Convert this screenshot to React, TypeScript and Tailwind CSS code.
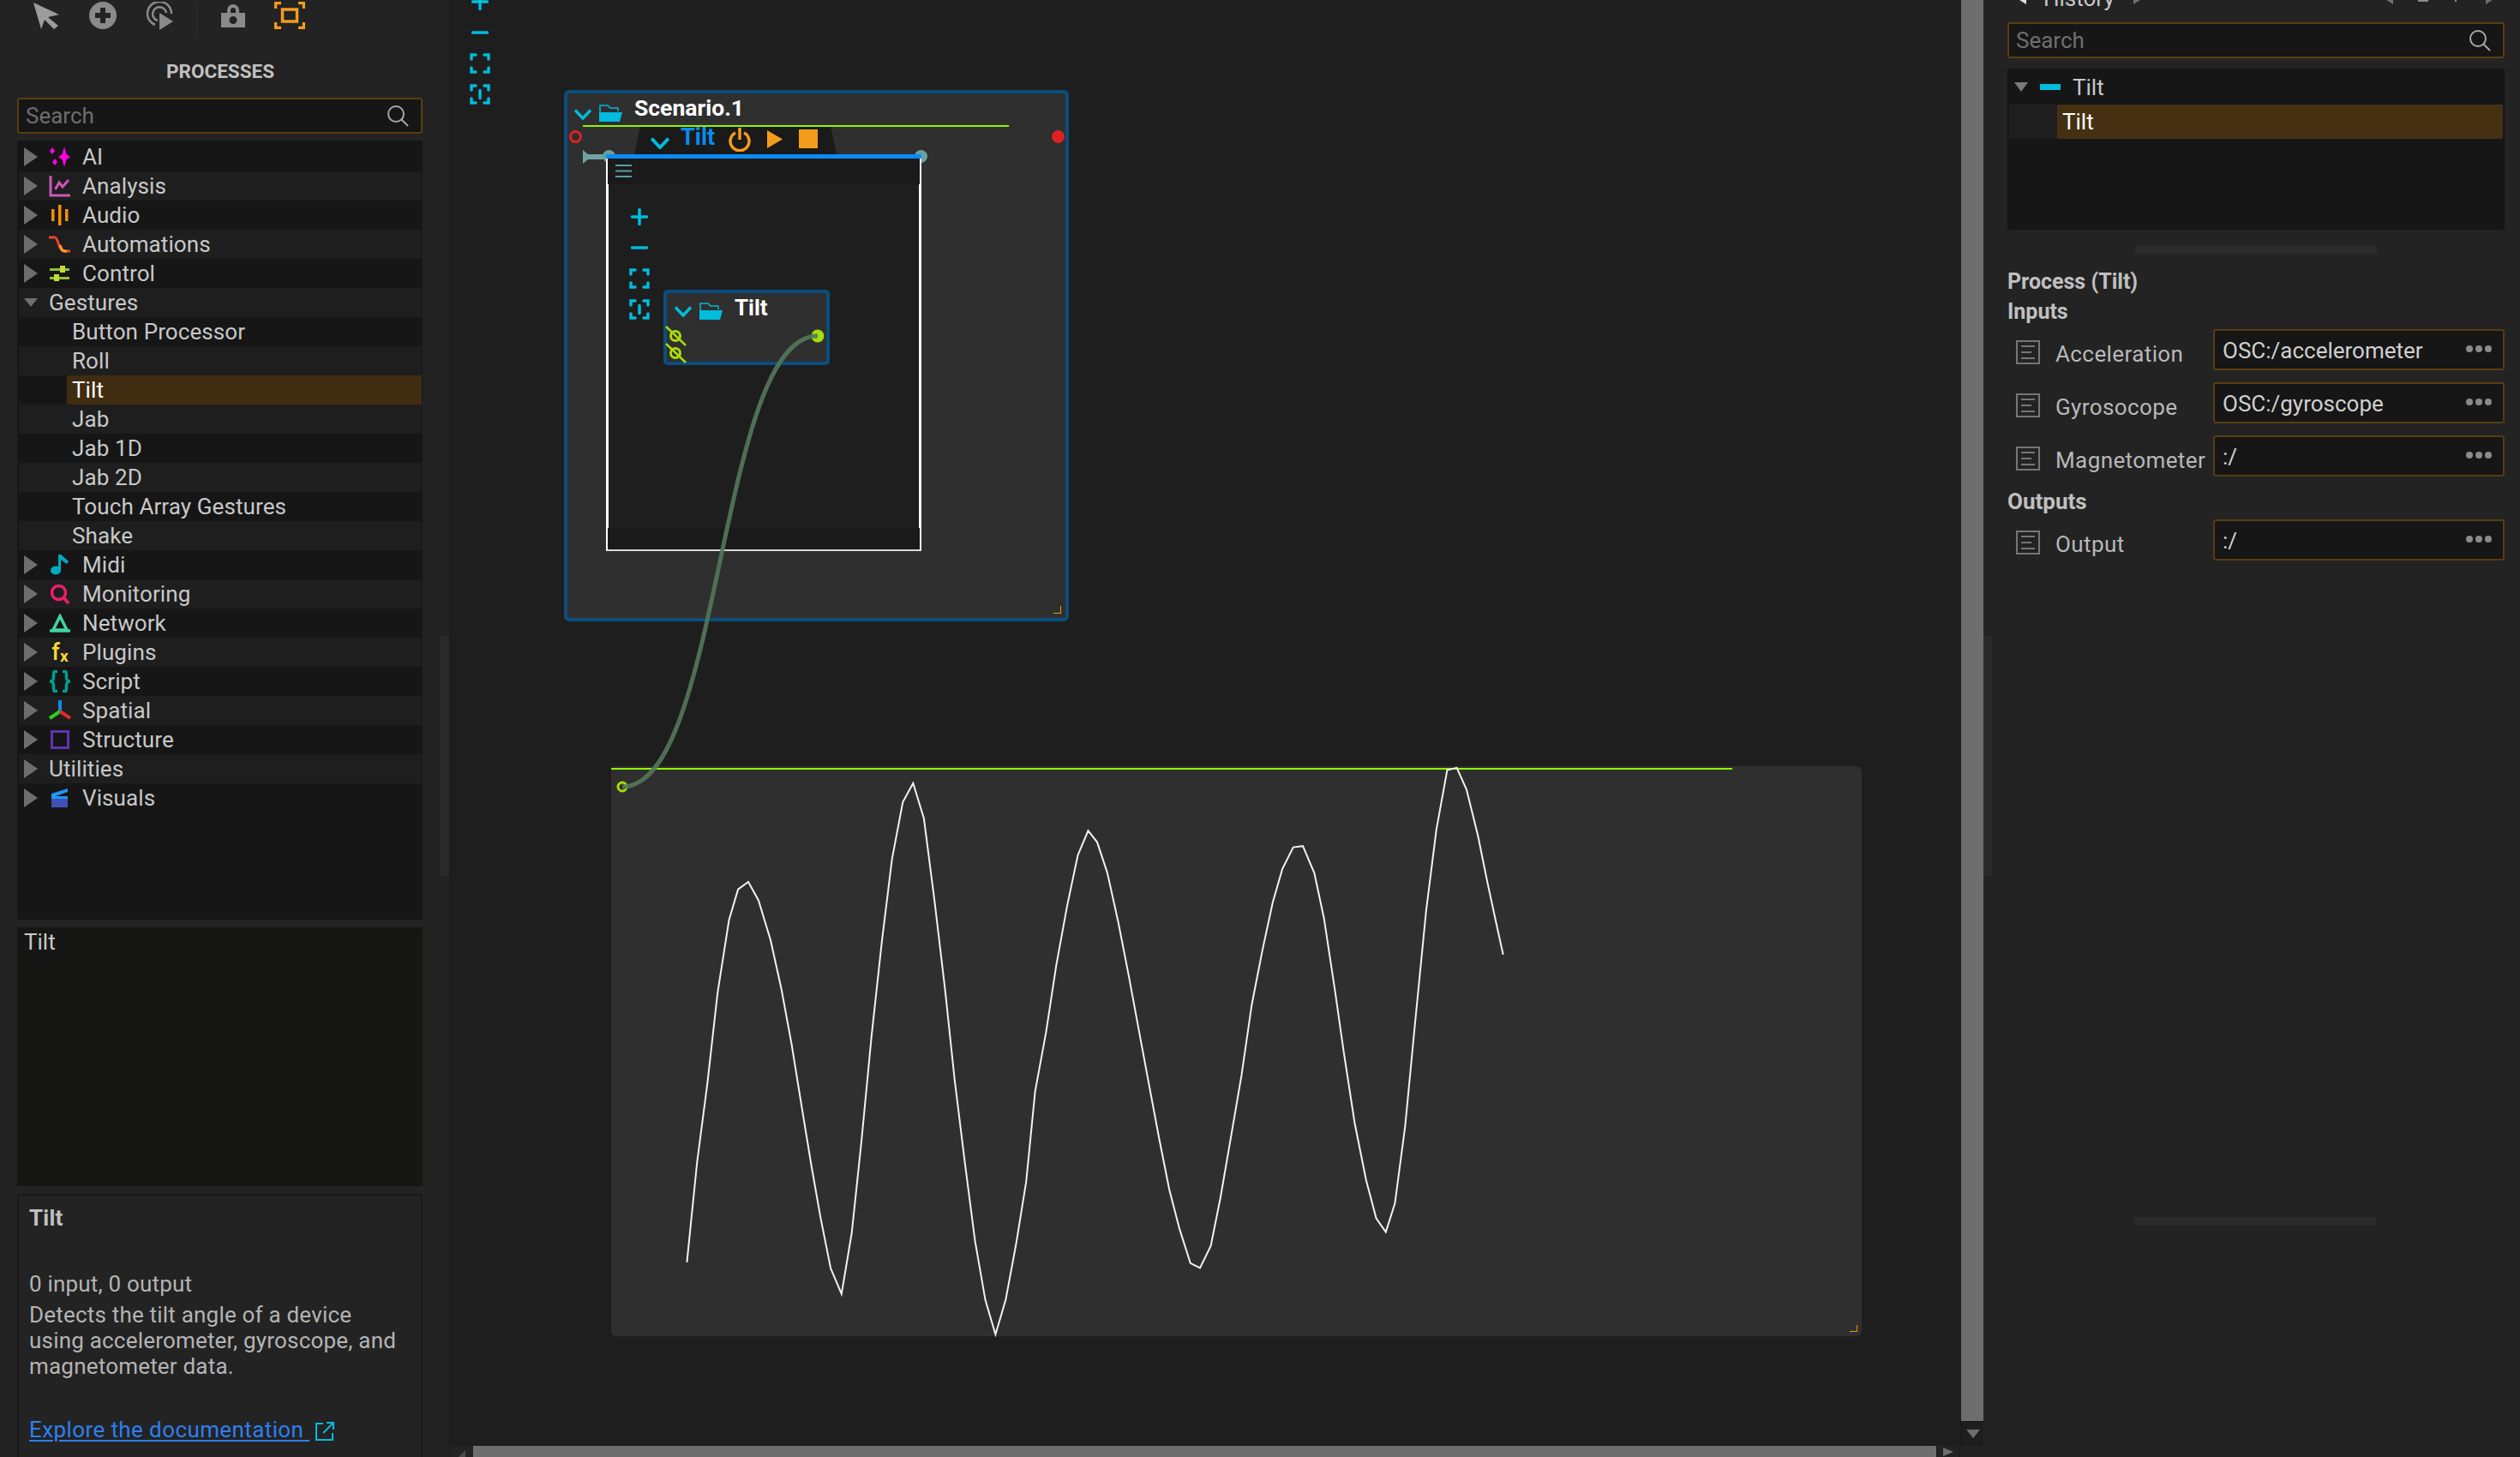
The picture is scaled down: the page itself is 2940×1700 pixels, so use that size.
import React from 'react';

const CYAN = '#00bcdc';
const ORANGE = '#f39c1c';
const LIME = '#a9dc0a';

// curve samples read off the reference
const wave: [number, number][] = [
  [173,1335],[190,1080],[207,880],[224,650],[243,465],[258,387],[275,368],[292,415],[312,515],[330,640],[347,780],[365,950],[380,1090],[395,1220],[412,1350],[430,1415],[447,1260],[463,1030],[480,760],[497,520],[514,310],[532,165],[549,117],[567,207],[585,420],[602,640],[618,870],[635,1080],[652,1280],[669,1430],[686,1518],[703,1430],[720,1290],[737,1130],[752,900],[770,750],[787,580],[805,430],[823,300],[840,238],[855,267],[872,345],[890,470],[908,610],[925,750],[942,890],[958,1020],[975,1150],[992,1250],[1010,1337],[1026,1349],[1044,1293],[1060,1170],[1077,1020],[1095,860],[1112,680],[1130,540],[1147,420],[1163,335],[1181,280],[1197,277],[1216,345],[1232,460],[1250,640],[1265,800],[1283,980],[1302,1125],[1319,1223],[1335,1258],[1350,1185],[1367,990],[1384,720],[1402,440],[1419,235],[1437,84],[1453,78],[1469,133],[1488,250],[1504,370],[1518,470],[1530,553],
];
const wavePoints = wave.map(([x, y]) => `${(680 + x / 1.425).toFixed(1)},${(860 + y / 2.178).toFixed(1)}`).join(' ');

function Arrow({ open }: { open?: boolean }) {
  if (open) {
    return (
      <svg width="16" height="10" viewBox="0 0 16 10" className="shrink-0">
        <path d="M0 0H16L8 10Z" fill="#6e6e6e" />
      </svg>
    );
  }
  return (
    <svg width="16" height="22" viewBox="0 0 16 22" className="shrink-0">
      <path d="M0 0L16 11L0 22Z" fill="#6e6e6e" />
    </svg>
  );
}

const icons: Record<string, React.ReactNode> = {
  AI: (
    <svg width="26" height="24" viewBox="0 0 26 24">
      <path d="M18 0L20.500 9L25 12L20.500 15L18 24L15.500 15L11 12L15.500 9Z" fill="#ff00e6" />
      <path d="M4 1L7 5L4 9L1 5Z M7 14L10 18L7 22L4 18Z" fill="#ff00e6" />
    </svg>
  ),
  Analysis: (
    <svg width="26" height="26" viewBox="0 0 26 26" fill="none" stroke="#c958b8">
      <path d="M2 1V24H25" strokeWidth="3" />
      <path d="M7.500 17L12 9L16 14L23 6" strokeWidth="3" />
    </svg>
  ),
  Audio: (
    <svg width="20" height="24" viewBox="0 0 20 24" fill="#f0900f">
      <rect x="0" y="5" width="3.500" height="14" />
      <rect x="8" y="0" width="3.500" height="24" />
      <rect x="16" y="5" width="3.500" height="14" />
    </svg>
  ),
  Automations: (
    <svg width="26" height="20" viewBox="0 0 26 20" fill="none" strokeWidth="3">
      <path d="M0 2H7C11 2 11 18 18 18H25" stroke="#ee4036" />
      <path d="M13 11C14 14 15 18 18 18H21" stroke="#f5a020" />
    </svg>
  ),
  Control: (
    <svg width="24" height="20" viewBox="0 0 24 20" fill="#8fbf3a">
      <rect x="0" y="4" width="23" height="3" />
      <rect x="12" y="1" width="6" height="8" fill="#c3dc2e" />
      <rect x="0" y="14" width="23" height="3" />
      <rect x="5" y="11" width="6" height="8" fill="#c3dc2e" />
    </svg>
  ),
  Midi: (
    <svg width="24" height="24" viewBox="0 0 24 24" fill="#00acc1">
      <ellipse cx="7" cy="18.500" rx="6" ry="5" />
      <path d="M10 18V0H13L22 8L20 11L13 6V18Z" />
    </svg>
  ),
  Monitoring: (
    <svg width="24" height="24" viewBox="0 0 24 24" fill="none" stroke="#ec1e68" strokeWidth="3.500">
      <circle cx="10.500" cy="10.500" r="8" />
      <path d="M16 16L22 23" />
    </svg>
  ),
  Network: (
    <svg width="24" height="22" viewBox="0 0 24 22" fill="none" stroke="#45d2a0" strokeWidth="3.500">
      <path d="M12 3L20 19H4Z" />
      <path d="M0 20H24" />
    </svg>
  ),
  Script: (
    <svg width="26" height="26" viewBox="0 0 26 26" fill="none" stroke="#009e90" strokeWidth="3.500">
      <path d="M10 1.500H7C5.500 1.500 5.500 3 5.500 5V9C5.500 11 4 13 1 13C4 13 5.500 15 5.500 17V21C5.500 23 5.500 24.500 7 24.500H10" />
      <path d="M16 1.500H19C20.500 1.500 20.500 3 20.500 5V9C20.500 11 22 13 25 13C22 13 20.500 15 20.500 17V21C20.500 23 20.500 24.500 19 24.500H16" />
    </svg>
  ),
  Spatial: (
    <svg width="26" height="24" viewBox="0 0 26 24" fill="none" strokeWidth="4">
      <path d="M13 0V14" stroke="#1088f0" />
      <path d="M13 13L1 21" stroke="#2fd018" />
      <path d="M13 13L25 21" stroke="#d82c2c" />
    </svg>
  ),
  Structure: (
    <svg width="22" height="22" viewBox="0 0 22 22" fill="none" stroke="#5e35b1" strokeWidth="3">
      <rect x="1.500" y="1.500" width="19" height="19" />
    </svg>
  ),
  Visuals: (
    <svg width="20" height="22" viewBox="0 0 20 22">
      <path d="M0 6L19 0V4L5 9H0Z" fill="#2196f3" />
      <rect x="0" y="9" width="19" height="13" fill="#3f51b5" />
      <rect x="0" y="9" width="19" height="3" fill="#2196f3" />
    </svg>
  ),
};

type TreeRow = { label: string; kind: 'cat' | 'open' | 'plain' | 'child'; selected?: boolean };

const rows: TreeRow[] = [
  { label: 'AI', kind: 'cat' },
  { label: 'Analysis', kind: 'cat' },
  { label: 'Audio', kind: 'cat' },
  { label: 'Automations', kind: 'cat' },
  { label: 'Control', kind: 'cat' },
  { label: 'Gestures', kind: 'open' },
  { label: 'Button Processor', kind: 'child' },
  { label: 'Roll', kind: 'child' },
  { label: 'Tilt', kind: 'child', selected: true },
  { label: 'Jab', kind: 'child' },
  { label: 'Jab 1D', kind: 'child' },
  { label: 'Jab 2D', kind: 'child' },
  { label: 'Touch Array Gestures', kind: 'child' },
  { label: 'Shake', kind: 'child' },
  { label: 'Midi', kind: 'cat' },
  { label: 'Monitoring', kind: 'cat' },
  { label: 'Network', kind: 'cat' },
  { label: 'Plugins', kind: 'cat' },
  { label: 'Script', kind: 'cat' },
  { label: 'Spatial', kind: 'cat' },
  { label: 'Structure', kind: 'cat' },
  { label: 'Utilities', kind: 'plain' },
  { label: 'Visuals', kind: 'cat' },
];

function SearchBox({ className }: { className?: string }) {
  return (
    <div className={`flex h-[42px] items-center justify-between rounded-[3px] border-2 border-[#5a3d10] bg-[#161616] pl-[8px] pr-[14px] ${className || ''}`}>
      <span className="text-[26px] leading-none text-[#6e6e6e]">Search</span>
      <svg width="26" height="26" viewBox="0 0 26 26" fill="none" stroke="#a8a8a8" strokeWidth="2">
        <circle cx="11" cy="11" r="9" />
        <path d="M17.500 17.500L25 25" />
      </svg>
    </div>
  );
}

function TreeItem({ row, even }: { row: TreeRow; even: boolean }) {
  const bg = even ? 'bg-[#1e1e1e]' : 'bg-[#161616]';
  if (row.kind === 'child') {
    return (
      <div className={`flex h-[34px] items-center pl-[56px] ${bg}`}>
        <span className={`flex h-full flex-1 items-center pl-[6px] ${row.selected ? 'bg-[#402c10] text-white' : ''}`}>{row.label}</span>
      </div>
    );
  }
  return (
    <div className={`flex h-[34px] items-center pl-[6px] ${bg}`}>
      <span className="flex w-[16px] justify-center"><Arrow open={row.kind === 'open'} /></span>
      {row.kind === 'cat' ? (
        <>
          <span className="ml-[13px] flex w-[26px] justify-center">
            {row.label === 'Plugins' ? (
              <span className="flex items-end font-medium leading-none text-[#fdd835]">
                <span className="text-[27px]">f</span>
                <span className="text-[19px] font-bold">x</span>
              </span>
            ) : icons[row.label]}
          </span>
          <span className="ml-[13px]">{row.label}</span>
        </>
      ) : (
        <span className="ml-[13px]">{row.label}</span>
      )}
    </div>
  );
}

function LeftPanel() {
  return (
    <aside className="relative h-full w-[525px] shrink-0 overflow-hidden bg-[#232323] text-[#c8c8c8]">
      <div className="flex h-[44px] items-start pl-[39px] pt-[2px]">
        <svg width="30" height="32" viewBox="0 0 30 32"><path d="M0 1L30 15L17 18L29 28L24 32L13 21L9 32Z" fill="#9c9c9c" /></svg>
        <svg className="ml-[35px]" width="32" height="32" viewBox="0 0 32 32">
          <circle cx="16" cy="16" r="16" fill="#8a8a8a" />
          <path d="M13 7H19V13H25V19H19V25H13V19H7V13H13Z" fill="#232323" />
        </svg>
        <svg className="ml-[34px]" width="32" height="34" viewBox="0 0 32 34" fill="none" stroke="#8a8a8a" strokeWidth="2.500">
          <path d="M11 27A14 14 0 1 1 30 14" />
          <path d="M14 22A8 8 0 1 1 24 13" />
          <path d="M16 13L32 23L16 33Z" fill="#8a8a8a" stroke="none" />
        </svg>
        <div className="ml-[27px] h-[43px] w-[1px] bg-[#2e2e2e]" />
        <svg className="ml-[28px] mt-[2px]" width="28" height="28" viewBox="0 0 28 28">
          <path d="M7 12V8A7 7 0 0 1 21 8V12H17V8A3 3 0 0 0 11 8V12Z" fill="#8a8a8a" />
          <path fillRule="evenodd" d="M0 11H28V28H0ZM14 15A4.500 4.500 0 1 0 14 24A4.500 4.500 0 1 0 14 15Z" fill="#8a8a8a" />
        </svg>
        <svg className="ml-[34px]" width="36" height="32" viewBox="0 0 36 32" fill="none" stroke={ORANGE} strokeWidth="3.500">
          <path d="M1.500 8V1.500H8M28 1.500H34.500V8M1.500 24V30.500H8M28 30.500H34.500V24" />
          <rect x="9.500" y="9" width="17" height="14" />
        </svg>
      </div>

      <div className="h-[70px] w-[514px] pt-[24px] text-center text-[22.500px] font-bold leading-[30px] text-[#c0c0c0]">PROCESSES</div>

      <div className="ml-[20px] w-[473px]">
        <SearchBox />
        <div className="mt-[8px] h-[909px] bg-[#161616] pl-[2px] pr-[1px] text-[26px] leading-[34px] tracking-[0.1px]">
          <div className="h-[2px]" />
          {rows.map((row, i) => <TreeItem key={row.label} row={row} even={i % 2 === 1} />)}
        </div>
        <div className="mt-[9px] h-[302px] bg-[#161614] pl-[8px] pt-[2px] text-[26px] leading-[30px] text-[#c8c8c8]">Tilt</div>
        <div className="mt-[9px] h-[320px] border-2 border-[#1a1a1a] pl-[12px] pt-[11px] text-[26px] leading-[30px] tracking-[0.2px] text-[#b4b4b4]">
          <div className="font-bold text-[#c0c0c0]">Tilt</div>
          <div className="mt-[47px]">0 input, 0 output</div>
          <div className="mt-[6px]">
            Detects the tilt angle of a device<br />
            using accelerometer, gyroscope, and<br />
            magnetometer data.
          </div>
          <div className="mt-[44px] flex items-center">
            <span className="tracking-[0.4px] text-[#2f7fef] underline underline-offset-[3px]">Explore the documentation&nbsp;</span>
            <svg className="ml-[7px] mt-[4px]" width="22" height="22" viewBox="0 0 22 22" fill="none" stroke={CYAN} strokeWidth="2">
              <path d="M9 2H1V21H20V13" />
              <path d="M9 13L21 1M13 1H21V9" />
            </svg>
          </div>
        </div>
      </div>
      <div className="absolute left-[514px] top-[742px] h-[280px] w-[10px] bg-[#2a2a2a]" />
      <div className="absolute left-[524px] top-0 h-full w-[1px] bg-[#1c1c1c]" />
    </aside>
  );
}

function FitIcon({ bar }: { bar?: boolean }) {
  return (
    <svg width="24" height="24" viewBox="0 0 24 24" fill="none" stroke={CYAN} strokeWidth="3.500" strokeLinecap="round">
      <path d="M2 7V2H7M17 2H22V7M2 17V22H7M17 22H22V17" />
      {bar && <path d="M12 7.500V16.500" />}
    </svg>
  );
}

function ZoomTools({ className }: { className: string }) {
  return (
    <div className={`absolute flex w-[24px] flex-col items-center ${className}`}>
      <svg width="20" height="20" viewBox="0 0 20 20" stroke={CYAN} strokeWidth="3.500" strokeLinecap="round">
        <path d="M1.500 10H18.500M10 1.500V18.500" />
      </svg>
      <svg className="mt-[16px]" width="20" height="20" viewBox="0 0 20 20" stroke={CYAN} strokeWidth="3.500" strokeLinecap="round">
        <path d="M1.500 10H18.500" />
      </svg>
      <div className="mt-[14px]"><FitIcon /></div>
      <div className="mt-[12px]"><FitIcon bar /></div>
    </div>
  );
}

function Chevron({ size = 20 }: { size?: number }) {
  return (
    <svg width={size} height={size * 0.65} viewBox="0 0 20 13" fill="none" stroke={CYAN} strokeWidth="3.500">
      <path d="M1 1.500L10 11L19 1.500" />
    </svg>
  );
}

function Folder() {
  return (
    <svg width="27" height="20" viewBox="0 0 27 20">
      <path d="M1 19V1H10L13 4H22V8" fill="none" stroke={CYAN} strokeWidth="1.500" />
      <path d="M0 20V9H27L24 20Z" fill={CYAN} />
    </svg>
  );
}

function Canvas() {
  return (
    <main className="relative h-[1687px] flex-1 overflow-hidden bg-[#1e1e1e]">
      <ZoomTools className="left-[23px] top-[-8px]" />

      {/* scenario node */}
      <section className="absolute left-[133px] top-[105px] h-[620px] w-[589px] rounded-[6px] border-4 border-[#0b4d7e] bg-[#2f2f2f]">
        <div className="absolute left-[8px] top-[1px] flex h-[32px] items-center">
          <span className="mt-[14px]"><Chevron /></span>
          <span className="ml-[9px] mt-[12px]"><Folder /></span>
          <span className="ml-[14px] text-[26.500px] font-bold leading-none text-white">Scenario.1</span>
        </div>

        {/* tab of the selected interval */}
        <div className="absolute left-[78px] top-[38px] flex h-[33px] w-[236px] items-center bg-[#1a1a1a] pl-[19px] [clip-path:polygon(3%_0,97%_0,100%_100%,0_100%)]">
          <span className="mt-[7px]"><Chevron size={22} /></span>
          <span className="ml-[13px] -mt-[6px] text-[27px] font-bold leading-none text-[#0a8cf0]">Tilt</span>
          <svg className="ml-[16px] -mt-[2px]" width="26" height="28" viewBox="0 0 26 28" fill="none" stroke={ORANGE} strokeWidth="3.500">
            <path d="M8 6A11 11 0 1 0 18 6M13 0V14" />
          </svg>
          <svg className="ml-[19px] -mt-[2px]" width="18" height="21" viewBox="0 0 18 21"><path d="M0 0L18 10.500L0 21Z" fill={ORANGE} /></svg>
          <div className="ml-[19px] -mt-[4px] h-[22px] w-[22px] bg-[#f39c1c]" />
        </div>
        <div className="absolute left-[18px] top-[37px] h-[2px] w-[497px] bg-[#8ff500]" />

        <div className="absolute left-[2px] top-[43px] h-[15px] w-[15px] rounded-full border-[3px] border-[#dd2222]" />
        <div className="absolute left-[565px] top-[43px] h-[15px] w-[15px] rounded-full bg-[#dd2222]" />

        {/* interval */}
        <svg className="absolute left-[18px] top-[66px]" width="30" height="16" viewBox="0 0 30 16">
          <path d="M0 0L6 5H30V11H6L0 16Z" fill="#6fa3a3" />
        </svg>
        <div className="absolute left-[41px] top-[66px] h-[15px] w-[15px] rounded-full bg-[#6a9fa0]" />
        <div className="absolute left-[405px] top-[66px] h-[15px] w-[15px] rounded-full bg-[#6a9fa0]" />
        <div className="absolute left-[45px] top-[71px] flex h-[463px] w-[368px] flex-col border-x-[3px] border-b-2 border-x-white border-b-[#d8d8d8] bg-[#1e1e1e]">
          <div className="-mx-[3px] h-[5px] bg-[#0a8cf5]" />
          <div className="-mx-[1px] flex h-[30px] items-start bg-[#1a1a1a] pl-[9px] pt-[7px]">
            <svg width="19" height="15" viewBox="0 0 19 15" stroke="#5f9c9c" strokeWidth="2">
              <path d="M0 1H19M0 7.500H19M0 14H19" />
            </svg>
          </div>
          <div className="flex-1" />
          <div className="-mx-[1px] h-[25px] bg-[#1a1a1a]" />
        </div>
        <ZoomTools className="left-[72px] top-[134px]" />

        {/* process node */}
        <div className="absolute left-[112px] top-[229px] h-[88px] w-[194px] rounded-[5px] border-4 border-[#0b4d7e] bg-[#2f2f2f]">
          <div className="absolute left-[9px] top-[5px] flex h-[24px] items-center">
            <span className="mt-[9px]"><Chevron /></span>
            <span className="ml-[9px] mt-[7px]"><Folder /></span>
            <span className="ml-[14px] text-[26px] font-bold leading-none text-white">Tilt</span>
          </div>
        </div>
        <div className="absolute bottom-[5px] right-[5px] h-[9px] w-[9px] border-b-[1.500px] border-r-[1.500px] border-[#e09a10]" />
      </section>

      {/* curve process */}
      <section className="absolute left-[188px] top-[894px] h-[665px] w-[1459px] rounded-[6px] bg-[#2f2f2f]">
        <div className="absolute left-0 top-[2px] h-[2px] w-[1308px] bg-[#8ff500]" />
        <div className="absolute bottom-[5px] right-[5px] h-[8px] w-[9px] border-b-[1.500px] border-r-[1.500px] border-[#e09a10]" />
      </section>

      <svg className="absolute left-0 top-0" width="1763" height="1687" viewBox="525 0 1763 1687" fill="none">
        <polyline points={wavePoints} stroke="#f2f2f2" strokeWidth="2" />
        {[392, 412].map((y) => (
          <g key={y} stroke={LIME}>
            <circle cx="788" cy={y} r="5.500" strokeWidth="3" />
            <path d={`M777 ${y - 11}L800 ${y + 11}`} strokeWidth="2.500" />
          </g>
        ))}
        <circle cx="954" cy="392" r="7.500" fill={LIME} />
        <circle cx="726" cy="918" r="5" stroke={LIME} strokeWidth="3" />
        <path d="M954 392C838 392 842 918 726 918" stroke="#54785a" strokeWidth="5" opacity="0.9" />
      </svg>
    </main>
  );
}

function ScrollBars() {
  return (
    <div className="relative flex h-[1687px] w-[26px] shrink-0 flex-col bg-[#1e1e1e]">
      <div className="h-[1658px] bg-[#6e6e6e]" />
      <div className="flex flex-1 items-center justify-center border-l border-t border-[#161616]">
        <svg width="16" height="10" viewBox="0 0 16 10"><path d="M0 0H16L8 10Z" fill="#6e6e6e" /></svg>
      </div>
    </div>
  );
}

function PortRow({ label, value, className }: { label: string; value: string; className?: string }) {
  return (
    <div className={`flex h-[48px] items-center pl-[10px] ${className || ''}`}>
      <svg className="mt-[6px] shrink-0" width="28" height="28" viewBox="0 0 28 28" fill="none" stroke="#767676" strokeWidth="2">
        <rect x="1" y="1" width="26" height="26" />
        <path d="M6 7H22M6 14H18M6 21H22" />
      </svg>
      <span className="ml-[18px] mt-[10px] w-[184px] shrink-0 tracking-[0.4px] text-[#b8b8b8]">{label}</span>
      <div className="flex h-[48px] flex-1 items-center justify-between rounded-[3px] border-2 border-[#5a3d10] bg-[#161616] pl-[9px] pr-[13px] text-[#d0d0d0]">
        <span className="mt-[1px]">{value}</span>
        <svg className="-mt-[2px]" width="30" height="8" viewBox="0 0 30 8" fill="#8a8a8a">
          <circle cx="4" cy="4" r="4" />
          <circle cx="15" cy="4" r="4" />
          <circle cx="26" cy="4" r="4" />
        </svg>
      </div>
    </div>
  );
}

function RightPanel() {
  return (
    <aside className="relative h-full flex-1 bg-[#232323] pl-[28px] pr-[18px] text-[26px] leading-[30px]">
      <div className="relative h-[26px] overflow-hidden text-[#c8c8c8]">
        <div className="-mt-[17px] flex items-center pl-[42px]">
          <span>History</span>
        </div>
        <svg className="absolute left-[14px] top-0" width="8" height="5" viewBox="0 0 8 5"><path d="M8 0V5L0 0Z" fill="#e0e0e0" /></svg>
        <svg className="absolute left-[147px] top-0" width="8" height="5" viewBox="0 0 8 5"><path d="M0 0V5L8 0Z" fill="#6e6e6e" /></svg>
        <svg className="absolute left-[442px] top-0" width="8" height="5" viewBox="0 0 8 5"><path d="M8 0V5L0 0Z" fill="#6e6e6e" /></svg>
        <div className="absolute left-[479px] top-0 h-[2px] w-[12px] bg-[#8a8a8a]" />
        <div className="absolute left-[522px] top-0 h-[2px] w-[2px] bg-[#8a8a8a]" />
        <svg className="absolute left-[558px] top-0" width="8" height="5" viewBox="0 0 8 5"><path d="M0 0V5L8 0Z" fill="#6e6e6e" /></svg>
      </div>

      <SearchBox />

      <div className="mt-[12px] h-[188px] bg-[#161616] text-[#c8c8c8]">
        <div className="flex h-[42px] items-center pl-[8px]">
          <svg width="16" height="11" viewBox="0 0 16 11"><path d="M0 0H16L8 11Z" fill="#7a7a7a" /></svg>
          <div className="ml-[14px] h-[7px] w-[24px] bg-[#00bcdc]" />
          <span className="ml-[14px] mt-[2px]">Tilt</span>
        </div>
        <div className="ml-[2px] mr-[2px] flex h-[40px] items-center bg-[#1e1e1e] pl-[56px]">
          <span className="flex h-full flex-1 items-center bg-[#463012] pl-[6px] text-white">Tilt</span>
        </div>
      </div>

      <div className="mx-auto mt-[18px] h-[10px] w-[282px] bg-[#2b2b2b]" />

      <div className="mt-[18px] text-[25px] font-bold text-[#c0c0c0]">Process (Tilt)</div>
      <div className="mt-[5px] text-[25px] font-bold text-[#c0c0c0]">Inputs</div>
      <div className="mt-[5px]">
        <PortRow label="Acceleration" value="OSC:/accelerometer" />
        <PortRow label="Gyrosocope" value="OSC:/gyroscope" className="mt-[14px]" />
        <PortRow label="Magnetometer" value=":/" className="mt-[14px]" />
      </div>
      <div className="mt-[14px] text-[26px] font-bold text-[#c0c0c0]">Outputs</div>
      <PortRow label="Output" value=":/" className="mt-[6px]" />

      <div className="absolute left-[176px] top-[1420px] h-[10px] w-[282px] bg-[#2b2b2b]" />
      <div className="absolute left-0 top-[742px] h-[280px] w-[10px] bg-[#2a2a2a]" />
    </aside>
  );
}

export default function App() {
  return (
    <div className="flex h-[1700px] w-[2940px] overflow-hidden bg-[#232323] font-['Roboto',sans-serif] text-[26px]">
      <LeftPanel />
      <div className="flex h-full w-[1789px] shrink-0 flex-col">
        <div className="flex">
          <Canvas />
          <ScrollBars />
        </div>
        <div className="flex h-[13px] items-stretch bg-[#232323]">
          <div className="flex w-[27px] shrink-0 items-start justify-center pt-[5px]">
            <svg width="8" height="8" viewBox="0 0 8 8"><path d="M8 0V8H0Z" fill="#4a4a4a" /></svg>
          </div>
          <div className="w-[1707px] bg-[#6e6e6e]" />
          <div className="flex w-[28px] shrink-0 items-start justify-center border-x border-[#161616] pt-[2px]">
            <svg width="12" height="10" viewBox="0 0 12 10"><path d="M0 0L12 5L0 10Z" fill="#6e6e6e" /></svg>
          </div>
        </div>
      </div>
      <RightPanel />
    </div>
  );
}
